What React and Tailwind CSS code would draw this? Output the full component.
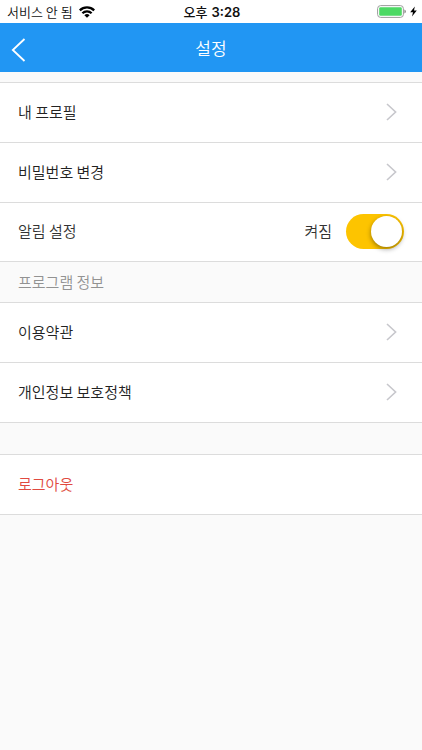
import { useState } from "react"

function StatusBar() {
  return (
    <div className="grid grid-cols-3 items-center h-[23px] bg-white pl-[7px] pr-[5px] text-[13px] leading-5 text-[#111]">
      <div className="flex items-center gap-1.5 whitespace-nowrap">
        <span>서비스 안 됨</span>
        <svg className="w-4 h-3" viewBox="0 0 16 12" fill="none" stroke="#000" strokeWidth="2.3">
          <path d="M0.8 4.4 A10.2 10.2 0 0 1 15.2 4.4" />
          <path d="M3.4 7.2 A6.5 6.5 0 0 1 12.6 7.2" />
          <path d="M8 11.8 L5.4 9.3 A3.6 3.6 0 0 1 10.6 9.3 Z" fill="#000" stroke="none" />
        </svg>
      </div>
      <div className="flex items-center justify-center gap-1 font-medium whitespace-nowrap">
        <span>오후</span>
        <span className="font-['Inter',sans-serif] font-semibold">3:28</span>
      </div>
      <div className="flex items-center justify-end gap-1">
        <svg className="w-[29px] h-[13px]" viewBox="0 0 29 13">
          <rect x="0.6" y="0.6" width="25.8" height="11.8" rx="3" fill="#fff" stroke="#9b9b9b" />
          <rect x="2.2" y="2.2" width="22.6" height="8.6" rx="1.2" fill="#4cd964" />
          <path d="M27.4 4.6 Q28.9 5 28.9 6.5 Q28.9 8 27.4 8.4 Z" fill="#8a8a8a" />
        </svg>
        <svg className="w-[7px] h-[11px]" viewBox="0 0 7 11" fill="#000">
          <path d="M4.8 0.4 L0.2 6.2 H3 L2 10.6 L6.8 4.5 H4 Z" />
        </svg>
      </div>
    </div>
  )
}

function Header() {
  return (
    <header className="grid grid-cols-[48px_1fr_48px] items-center h-[49px] bg-[#2196f3] text-white">
      <button aria-label="뒤로" className="flex items-center h-full pt-1 pl-[11px]">
        <svg className="w-[15px] h-6" viewBox="0 0 15 24" fill="none" stroke="currentColor" strokeWidth="1.8">
          <path d="M13.5 1 L1.8 12 L13.5 23" />
        </svg>
      </button>
      <h1 className="text-center text-[17px] leading-6">설정</h1>
    </header>
  )
}

function LinkRow({ label }) {
  return (
    <a href="#" className="flex items-center justify-between h-[60px] pl-[18px] pr-[25px] pb-0.5 bg-white border-b border-[#dcdcdc] text-[#222]">
      <span>{label}</span>
      <svg className="w-[11px] h-[18px]" viewBox="0 0 11 18" fill="none" stroke="#c7c7cc" strokeWidth="1.6">
        <path d="M1 1 L9.6 9 L1 17" />
      </svg>
    </a>
  )
}

export default function App() {
  const [enabled, setEnabled] = useState(true)

  return (
    <div className="min-h-screen bg-[#fafafa] font-['Noto_Sans_CJK_KR',sans-serif] text-[15px] leading-6 font-[350]">
      <StatusBar />
      <Header />

      <main>
        <section className="mt-2.5 border-t border-[#dcdcdc]">
          <LinkRow label="내 프로필" />
          <LinkRow label="비밀번호 변경" />
          <label className="flex items-center h-[59px] px-[18px] pb-0.5 bg-white border-b border-[#dcdcdc] text-[#333]">
            <span className="flex-1">알림 설정</span>
            <span>{enabled ? "켜짐" : "꺼짐"}</span>
            <input
              type="checkbox"
              checked={enabled}
              onChange={(e) => setEnabled(e.target.checked)}
              className="appearance-none flex items-center w-[58px] h-[35px] ml-3.5 px-0.5 rounded-full bg-[#ccc] checked:bg-[#fdc400] checked:justify-end before:content-[''] before:size-[31px] before:rounded-full before:bg-white before:shadow-[0_2px_5px_rgba(0,0,0,0.4)]"
            />
          </label>
        </section>

        <section>
          <h2 className="flex items-center h-[41px] px-[18px] border-b border-[#dcdcdc] text-[#929292]">프로그램 정보</h2>
          <LinkRow label="이용약관" />
          <LinkRow label="개인정보 보호정책" />
        </section>

        <section className="mt-[31px] border-y border-[#dcdcdc] bg-white">
          <button className="flex items-center w-full h-[59px] px-[18px] pb-0.5 text-[#e04a40]">로그아웃</button>
        </section>
      </main>
    </div>
  )
}
